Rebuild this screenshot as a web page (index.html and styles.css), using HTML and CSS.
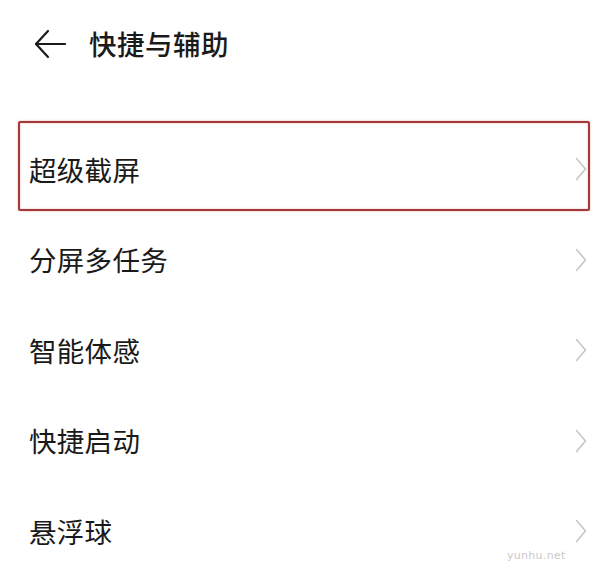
FILE: index.html
```html
<!DOCTYPE html>
<html lang="zh">
<head>
<meta charset="utf-8">
<title>快捷与辅助</title>
<link rel="stylesheet" href="styles.css">
</head>
<body>
<div class="page">
  <header class="header">
    <svg class="back" width="32" height="30" viewBox="0 0 32 30" fill="none" stroke="#1a1a1a" stroke-width="2.2" stroke-linecap="round" stroke-linejoin="round">
      <path d="M31 15H2"/>
      <path d="M14 2L2 15L14 28"/>
    </svg>
    <h1 class="title">快捷与辅助</h1>
  </header>
  <ul class="list">
    <li class="row row-active">
      <span class="label">超级截屏</span>
      <svg class="chev" width="12" height="24" viewBox="0 0 12 24" fill="none" stroke="#c6c6c6" stroke-width="1.6" stroke-linecap="round" stroke-linejoin="round"><path d="M1.5 1.5L10.5 12L1.5 22.5"/></svg>
      <span class="highlight"></span>
    </li>
    <li class="row">
      <span class="label">分屏多任务</span>
      <svg class="chev" width="12" height="24" viewBox="0 0 12 24" fill="none" stroke="#c6c6c6" stroke-width="1.6" stroke-linecap="round" stroke-linejoin="round"><path d="M1.5 1.5L10.5 12L1.5 22.5"/></svg>
    </li>
    <li class="row">
      <span class="label">智能体感</span>
      <svg class="chev" width="12" height="24" viewBox="0 0 12 24" fill="none" stroke="#c6c6c6" stroke-width="1.6" stroke-linecap="round" stroke-linejoin="round"><path d="M1.5 1.5L10.5 12L1.5 22.5"/></svg>
    </li>
    <li class="row">
      <span class="label">快捷启动</span>
      <svg class="chev" width="12" height="24" viewBox="0 0 12 24" fill="none" stroke="#c6c6c6" stroke-width="1.6" stroke-linecap="round" stroke-linejoin="round"><path d="M1.5 1.5L10.5 12L1.5 22.5"/></svg>
    </li>
    <li class="row">
      <span class="label">悬浮球</span>
      <svg class="chev" width="12" height="24" viewBox="0 0 12 24" fill="none" stroke="#c6c6c6" stroke-width="1.6" stroke-linecap="round" stroke-linejoin="round"><path d="M1.5 1.5L10.5 12L1.5 22.5"/></svg>
    </li>
  </ul>
  <span class="watermark">yunhu.net</span>
</div>
</body>
</html>
```
FILE: styles.css
```css
html, body {
  margin: 0;
  padding: 0;
  background: #ffffff;
}

body {
  font-family: "Noto Sans CJK SC", "Noto Sans", sans-serif;
  color: #1a1a1a;
}

.page {
  position: relative;
  width: 606px;
  height: 579px;
  overflow: hidden;
}

.header {
  height: 88px;
  display: flex;
  align-items: center;
  padding-left: 34px;
  gap: 23px;
}

.back {
  display: block;
  flex: none;
}

.title {
  margin: 0;
  font-size: 27.5px;
  font-weight: 500;
  line-height: 1;
  letter-spacing: 0.5px;
}

.list {
  list-style: none;
  margin: 0;
  padding: 36px 0 0 0;
}

.row {
  position: relative;
  height: 90.5px;
  display: flex;
  align-items: center;
  justify-content: space-between;
  padding: 0 19px 0 29px;
}

.label {
  font-size: 27.5px;
  font-weight: 400;
  line-height: 1;
  letter-spacing: 0.3px;
}

.chev {
  display: block;
  flex: none;
}

.highlight {
  position: absolute;
  top: -3px;
  left: 18px;
  right: 16px;
  height: 90px;
  box-sizing: border-box;
  border: 2px solid #a23a3a;
  border-radius: 2px;
  box-shadow: 0 0 2px rgba(220, 90, 90, 0.6), inset 0 0 2px rgba(220, 90, 90, 0.5);
  pointer-events: none;
}

.watermark {
  position: absolute;
  left: 507px;
  top: 549px;
  font-family: "DejaVu Sans", sans-serif;
  font-size: 11px;
  color: #cacaca;
  letter-spacing: 0.3px;
}
```
